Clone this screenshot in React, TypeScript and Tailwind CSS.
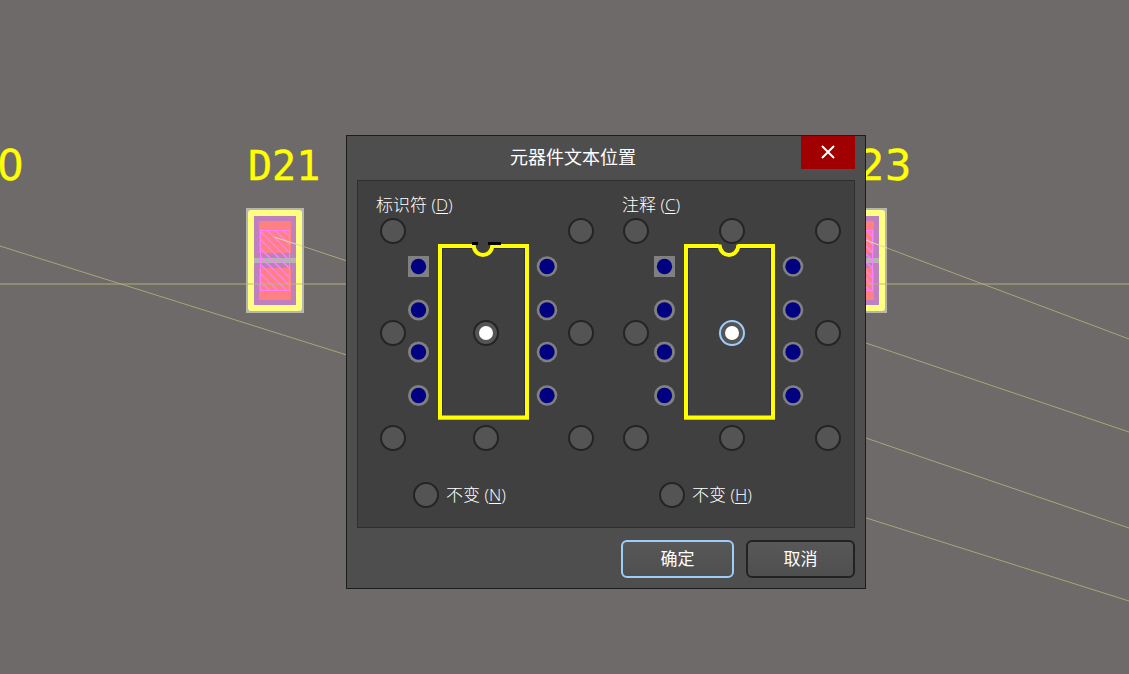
import React from "react";

const PIN_ROWS = [24.5, 68, 110, 153.5];

function Footprint({ x }: { x: number }) {
  return (
    <g transform={`translate(${x} 208)`}>
      <rect width="58" height="105" fill="#b6b5b0" />
      <rect x="2" y="2" width="54" height="101" rx="3" fill="#ffff80" />
      <rect x="8" y="8" width="42" height="89" fill="#c080c0" />
      <rect x="13" y="13" width="32" height="32" fill="#ff8080" />
      <rect x="13" y="60" width="32" height="32" fill="#ff8080" />
      <rect x="8" y="50" width="42" height="5" fill="#b5b4b3" />
      <path
        d="M15 74L23 82M15 66L31 82M15 57L40 82M15 49L43 77M15 41L43 69M15 32L43 60M15 24L43 52M22 23L43 44M30 23L43 36M38 23L43 28"
        stroke="#ff80ff"
        strokeWidth="1.3"
      />
      <rect x="14.5" y="22.5" width="29" height="60" fill="none" stroke="#ff80ff" />
    </g>
  );
}

function Board() {
  return (
    <svg className="absolute inset-0 h-full w-full" aria-hidden="true">
      <g
        fill="#ffff00"
        stroke="#ffff00"
        strokeWidth="0.4"
        strokeLinejoin="round"
        className="font-['DejaVu_Sans',sans-serif]"
      >
        <text x="-3" y="180" fontSize="42">0</text>
        <text x="248" y="180" fontSize="40" className="font-['DejaVu_Sans_Mono',monospace]">D21</text>
        <text x="858" y="180" fontSize="42">23</text>
      </g>
      <Footprint x={246} />
      <Footprint x={829} />
      <path d="M0 284H1129" stroke="#b8b878" strokeOpacity="0.45" strokeWidth="2" />
      <g stroke="#b0b07c" strokeOpacity="0.85" fill="none">
        <path d="M0 246L350 356" />
        <path d="M302 246L350 262" />
        <path d="M887 248L1129 339" />
        <path d="M860 341L1129 432" />
        <path d="M860 436L1129 528" />
        <path d="M860 516L1129 601" />
      </g>
      <g stroke="#e0d8b0" fill="none">
        <path d="M274 237L302 246" />
        <path d="M860 238L887 248" />
      </g>
    </svg>
  );
}

function Chip({ marks }: { marks?: boolean }) {
  return (
    <svg width="150" height="178" viewBox="0 0 150 178" aria-hidden="true">
      <path d="M65 4H32V175.500H119V4H84" fill="none" stroke="#ffff00" strokeWidth="4" />
      <path d="M30 177.500H121" stroke="#c8c810" />
      <path d="M34.500 6V173M116.500 6V173M35 6.500H64M85 6.500H116" stroke="#303038" />
      <path d="M65.500 2.500C66 16.500 84 16.500 84.500 2.500" fill="none" stroke="#ffff00" strokeWidth="4" />
      {marks && <path d="M64 1.500H70M80 1.500H93" stroke="#000000" strokeWidth="3" />}
      {PIN_ROWS.map((y, i) => (
        <g key={y}>
          {i === 0 ? (
            <rect x="0" y="14" width="21" height="21" fill="#808080" />
          ) : (
            <circle cx="10.500" cy={y} r="10.500" fill="#808080" />
          )}
          <circle cx="10.500" cy={y} r="7.700" fill="#000080" />
          <circle cx="139" cy={y} r="10.300" fill="#808080" />
          <circle cx="139" cy={y} r="7.700" fill="#000080" />
        </g>
      ))}
    </svg>
  );
}

type RadioProps = {
  name: string;
  id?: string;
  label?: string;
  checked?: boolean;
  highlighted?: boolean;
  className?: string;
};

function Radio({ name, id, label, checked, highlighted, className = "" }: RadioProps) {
  return (
    <input
      type="radio"
      name={name}
      id={id}
      aria-label={label}
      defaultChecked={checked}
      className={`grid size-[26px] shrink-0 appearance-none place-content-center rounded-full border-2 bg-[#545454] outline-none before:size-[14px] before:rounded-full checked:before:bg-white ${
        highlighted ? "border-[#9fcdfa]" : "border-[#242424]"
      } ${className}`}
    />
  );
}

type PickerProps = {
  name: string;
  title: string;
  titleKey: string;
  keepKey: string;
  gridClass: string;
  hideTop?: boolean;
  highlighted?: boolean;
};

function PositionPicker({ name, title, titleKey, keepKey, gridClass, hideTop, highlighted }: PickerProps) {
  return (
    <fieldset className="min-w-0 font-light text-white">
      <legend className="h-6 leading-6">
        {title} (<span className="underline underline-offset-2">{titleKey}</span>)
      </legend>
      <div className="grid pt-px">
        <div className="col-start-1 row-start-1 pt-6 pl-8">
          <Chip marks={hideTop} />
        </div>
        <div className={`z-10 col-start-1 row-start-1 grid grid-rows-[102px_105px_26px] ${gridClass}`}>
          <Radio name={name} label="左上" />
          {!hideTop && <Radio name={name} label="中上" />}
          <Radio name={name} label="右上" className="col-start-3" />
          <Radio name={name} label="左中" />
          <Radio name={name} label="正中" checked highlighted={highlighted} />
          <Radio name={name} label="右中" />
          <Radio name={name} label="左下" />
          <Radio name={name} label="中下" />
          <Radio name={name} label="右下" />
        </div>
      </div>
      <div className="mt-[31px] flex items-center gap-[7px] pl-[37px]">
        <Radio name={name} id={`${name}-keep`} />
        <label htmlFor={`${name}-keep`} className="leading-6">
          不变 (<span className="underline underline-offset-2">{keepKey}</span>)
        </label>
      </div>
    </fieldset>
  );
}

export default function App() {
  return (
    <main className="relative min-h-screen overflow-hidden bg-[#6e6a69] font-['Open_Sans','Noto_Sans_CJK_SC',sans-serif]">
      <Board />
      <section
        role="dialog"
        aria-labelledby="dialog-title"
        className="absolute top-[135px] left-[346px] w-[520px] border border-[#1c1c1c] bg-[#4e4e4e] px-[10px] pb-[10px] text-[17px] text-[#f0f0f0]"
      >
        <header className="-ml-3 flex h-11 items-start">
          <h1 id="dialog-title" className="flex-1 text-center text-[18px] leading-[42px] text-white">
            元器件文本位置
          </h1>
          <button type="button" aria-label="关闭" className="grid h-[33px] w-[54px] place-items-center bg-[#a00000] pb-0.5">
            <svg width="14" height="14" viewBox="0 0 14 14" aria-hidden="true">
              <path d="M1 1L13 13M13 1L1 13" stroke="#ffffff" strokeWidth="2" />
            </svg>
          </button>
        </header>
        <div className="flex gap-[27px] border border-[#2e2e2e] bg-[#404040] pt-3 pb-[19px] pl-[18px]">
          <div className="w-[219px]">
            <PositionPicker
              name="designator"
              title="标识符"
              titleKey="D"
              keepKey="N"
              gridClass="ml-1 grid-cols-[93px_95px_26px]"
              hideTop
            />
          </div>
          <div className="w-[219px]">
            <PositionPicker
              name="comment"
              title="注释"
              titleKey="C"
              keepKey="H"
              gridClass="ml-px grid-cols-[96px_96px_26px]"
              highlighted
            />
          </div>
        </div>
        <footer className="mt-3 flex justify-end gap-3 text-white">
          <button
            type="button"
            className="h-[38px] w-[113px] rounded-md border-2 border-[#9fcdfa] bg-linear-to-b from-[#585858] to-[#4f4f4f]"
          >
            确定
          </button>
          <button
            type="button"
            className="h-[38px] w-[109px] rounded-md border-2 border-[#222222] bg-linear-to-b from-[#585858] to-[#4f4f4f]"
          >
            取消
          </button>
        </footer>
      </section>
    </main>
  );
}
